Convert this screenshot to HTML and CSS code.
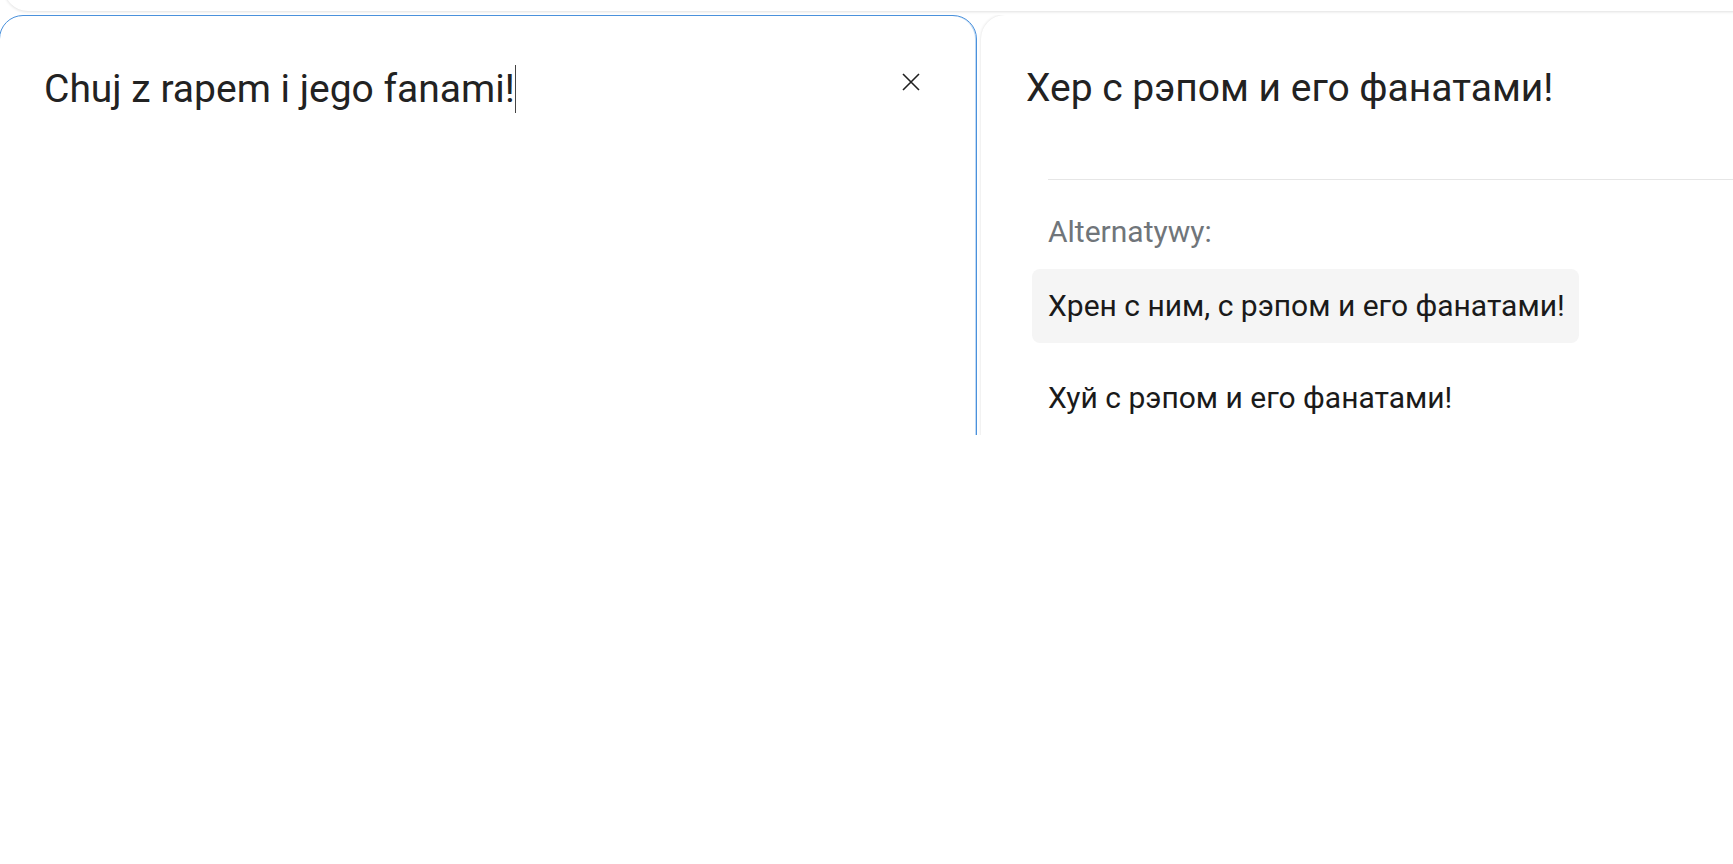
FILE: index.html
```html
<!DOCTYPE html>
<html lang="pl">
<head>
<meta charset="utf-8">
<title>Tłumacz</title>
<link rel="stylesheet" href="styles.css">
</head>
<body>
<div class="topbar"></div>
<div class="panes">
  <section class="card source">
    <div class="source-row">
      <div class="source-text">Chuj z rapem i jego fanami!<span class="caret"></span></div>
      <button class="clear" aria-label="Wyczyść">
        <svg viewBox="0 0 24 24" width="24" height="24"><path d="M4 4L20 20M20 4L4 20" stroke="#1f1f1f" stroke-width="1.6" fill="none"/></svg>
      </button>
    </div>
  </section>
  <section class="card target">
    <div class="target-text">Хер с рэпом и его фанатами!</div>
    <div class="alts">
      <div class="alts-label">Alternatywy:</div>
      <div class="alt alt-active">Хрен с ним, с рэпом и его фанатами!</div>
      <div class="alt">Хуй с рэпом и его фанатами!</div>
    </div>
  </section>
</div>
</body>
</html>
```
FILE: styles.css
```css
html, body {
  margin: 0;
  padding: 0;
  background: #ffffff;
  font-family: Roboto, "Noto Sans", Arial, sans-serif;
  color: #1f1f1f;
  overflow: hidden;
}
.topbar {
  height: 40px;
  margin-top: -29px;
  margin-left: 4px;
  margin-right: -40px;
  background: #ffffff;
  border-radius: 0 0 24px 24px;
  box-shadow: 0 1px 3px rgba(0,0,0,0.12);
}
.panes {
  display: flex;
  gap: 4px;
  margin-top: 4px;
  margin-left: -1px;
  margin-right: -60px;
  height: 420px;
  overflow: hidden;
}
.card {
  height: 700px;
  border-radius: 24px;
  background: #ffffff;
  box-sizing: border-box;
}
.source {
  flex: 0 0 978px;
  border: 1px solid #4a91dc;
  box-shadow: inset -1px 0 0 rgba(74,145,220,0.35);
  padding: 46px 44px 0 44px;
}
.source-row {
  display: flex;
  align-items: flex-start;
  justify-content: space-between;
}
.source-text {
  font-size: 39px;
  line-height: 54px;
  color: #222222;
}
.caret {
  display: inline-block;
  width: 1px;
  height: 48px;
  background: #444;
  vertical-align: -11px;
}
.clear {
  border: 0;
  background: none;
  padding: 0;
  margin: 8px 9px 0 0;
  width: 24px;
  height: 24px;
  cursor: pointer;
}
.target {
  flex: 1 1 auto;
  box-shadow: 0 0 3px rgba(0,0,0,0.15);
  padding: 46px 0 0 45px;
}
.target-text {
  font-size: 39px;
  line-height: 54px;
  color: #222222;
}
.alts {
  margin-top: 64px;
  margin-left: 22px;
  border-top: 1px solid #e6e6e6;
  padding-top: 34px;
}
.alts-label {
  font-size: 30px;
  line-height: 36px;
  color: #70757a;
  margin-bottom: 19px;
}
.alt {
  font-size: 30px;
  line-height: 36px;
  padding: 19px 14px 19px 16px;
  margin-left: -16px;
  width: fit-content;
  white-space: nowrap;
  border-radius: 8px;
  color: #1a1a1a;
}
.alt-active {
  background: #f5f5f5;
}
.alt + .alt {
  margin-top: 18px;
}
```
